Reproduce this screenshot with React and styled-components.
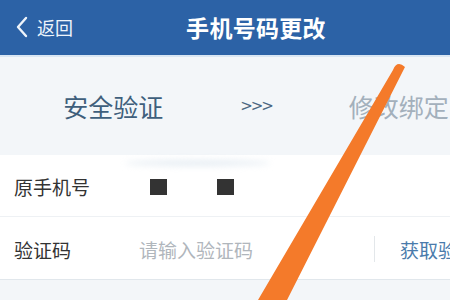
import React from "react";
import styled, { createGlobalStyle } from "styled-components";

const GlobalStyle = createGlobalStyle`
  html, body {
    margin: 0;
    padding: 0;
    width: 450px;
    height: 300px;
    overflow: hidden;
    background: #f3f6f9;
  }
  * { box-sizing: border-box; }
`;

const Viewport = styled.div`
  position: relative;
  width: 450px;
  height: 300px;
  overflow: hidden;
  font-family: "Noto Sans CJK SC", "Noto Sans", sans-serif;
`;

const Screen = styled.div`
  width: 512px;
  height: 300px;
  background: #f3f6f9;
  display: flex;
  flex-direction: column;
`;

const Header = styled.div`
  height: 57px;
  flex-shrink: 0;
  background: #2c62a6;
  border-bottom: 2px solid #d9e6f3;
  display: grid;
  grid-template-columns: 1fr auto 1fr;
  align-items: center;
  padding-bottom: 2px;
  color: #fff;
`;

const Back = styled.div`
  display: flex;
  align-items: center;
  gap: 9px;
  padding-left: 15px;
  font-size: 18px;
  color: #eef4fb;

  svg { display: block; }
`;

const Title = styled.div`
  font-size: 23px;
  font-weight: 700;
  letter-spacing: 0.3px;
`;

const Steps = styled.div`
  height: 98px;
  flex-shrink: 0;
  display: flex;
  align-items: center;
  justify-content: center;
  gap: 77px;
`;

const Step = styled.div`
  font-size: 25px;
  line-height: 1;
  color: ${(p) => (p.$active ? "#3f5f7c" : "#a3b0bc")};
`;

const Arrows = styled.div`
  font-family: "DejaVu Sans", sans-serif;
  font-size: 15px;
  letter-spacing: -2px;
  color: #4b6681;
`;

const Form = styled.div`
  background: #fff;
  display: flex;
  flex-direction: column;
`;

const Row = styled.div`
  height: ${(p) => p.$h}px;
  display: flex;
  align-items: center;
  padding-left: 14px;
  padding-top: 2px;
  border-bottom: 1px solid ${(p) => (p.$last ? "#e1e7ec" : "#eef1f4")};
`;

const Label = styled.div`
  width: 125px;
  flex-shrink: 0;
  font-size: 19px;
  color: #333;
`;

const Masked = styled.div`
  display: flex;
  gap: 50px;
  padding-left: 11px;
`;

const Block = styled.span`
  width: 17px;
  height: 16px;
  background: #333;
`;

const Input = styled.input`
  width: 235px;
  border: none;
  outline: none;
  padding: 0;
  background: transparent;
  font-family: inherit;
  font-size: 19px;
  color: #333;

  &::placeholder { color: #b0b6bc; }
`;

const Divider = styled.span`
  width: 1px;
  height: 26px;
  background: #e3e7ea;
  margin-right: 25px;
`;

const CodeButton = styled.div`
  font-size: 19px;
  color: #4a7bab;
  white-space: nowrap;
`;

const Smudge = styled.div`
  position: absolute;
  left: 125px;
  top: 160px;
  width: 145px;
  height: 6px;
  border-radius: 50%;
  background: #e6edf3;
  filter: blur(3px);
  pointer-events: none;
`;

const Stroke = styled.svg`
  position: absolute;
  left: 0;
  top: 0;
  pointer-events: none;
`;

export default function App() {
  return (
    <>
      <GlobalStyle />
      <Viewport>
        <Screen>
          <Header>
            <Back>
              <svg width="13" height="22" viewBox="0 0 13 22">
                <polyline points="11,2 3,11 11,20" fill="none" stroke="#eef4fb" strokeWidth="2.4" strokeLinecap="round" strokeLinejoin="round" />
              </svg>
              <span>返回</span>
            </Back>
            <Title>手机号码更改</Title>
            <div />
          </Header>

          <Steps>
            <Step $active>安全验证</Step>
            <Arrows>&gt;&gt;&gt;</Arrows>
            <Step>修改绑定</Step>
          </Steps>

          <Form>
            <Row $h={62}>
              <Label>原手机号</Label>
              <Masked>
                <Block />
                <Block />
              </Masked>
            </Row>
            <Row $h={63} $last>
              <Label>验证码</Label>
              <Input placeholder="请输入验证码" />
              <Divider />
              <CodeButton>获取验证码</CodeButton>
            </Row>
          </Form>
        </Screen>

        <Smudge />
        <Stroke width="450" height="300" viewBox="0 0 450 300">
          <path d="M 393 70 Q 397 60 405 67 L 287 300 L 258 300 Z" fill="#f47a2a" />
        </Stroke>
      </Viewport>
    </>
  );
}
